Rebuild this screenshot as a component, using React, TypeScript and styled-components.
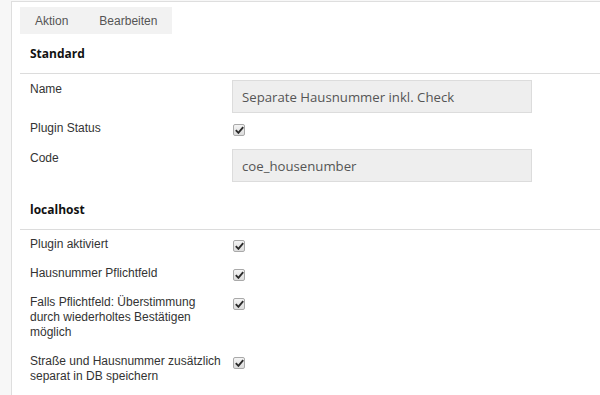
import React from "react";
import styled, { createGlobalStyle } from "styled-components";

const Global = createGlobalStyle`
  html, body { margin: 0; padding: 0; background: #ffffff; }
  body { font-family: "Liberation Sans", Arial, sans-serif; }
`;

const Page = styled.div`
  display: flex;
  width: 600px;
  height: 395px;
  overflow: hidden;
  background: #f7f7f7;
`;

const Sidebar = styled.div`
  width: 11px;
  flex: none;
`;

const Main = styled.div`
  flex: 1;
  margin-top: 1px;
  background: #ffffff;
  border-top: 1px solid #dedede;
  border-left: 1px solid #dedede;
  padding: 5px 0 0 8px;
`;

const TabBar = styled.div`
  display: inline-flex;
  background: #f2f2f2;
  height: 27px;
  align-items: center;
`;

const Tab = styled.div`
  padding: 0 15px 0 16px;
  font-size: 12px;
  color: #555;
  &:first-child { padding-left: 15px; }
`;

const Heading = styled.div`
  padding: 10px 10px 9px;
  font-family: "Open Sans", sans-serif;
  font-weight: 700;
  font-size: 12px;
  line-height: 20px;
  color: #111;
  border-bottom: 1px solid #dcdcdc;
`;

const FormList = styled.div`
  display: flex;
  flex-direction: column;
  gap: 7px;
  padding: 6px 0 8px 10px;
`;

const Row = styled.div`
  display: grid;
  grid-template-columns: 202px 300px;
  align-items: start;
`;

const Label = styled.div<{ $input?: boolean }>`
  font-size: 12px;
  line-height: 15px;
  color: #333;
  padding: ${(p) => (p.$input ? "2px" : "1px")} 8px 6px 0;
`;

const TextField = styled.div`
  box-sizing: border-box;
  height: 33px;
  background: #eeeeee;
  border: 1px solid #dcdcdc;
  padding: 0 9px;
  display: flex;
  align-items: center;
  font-family: "Open Sans", sans-serif;
  font-size: 13.2px;
  color: #555;
`;

const Check = styled.span`
  box-sizing: border-box;
  display: flex;
  align-items: center;
  justify-content: center;
  width: 12px;
  height: 12px;
  margin: 4px 0 0 1px;
  border: 1px solid #a9a9a9;
  border-radius: 2px;
  background: linear-gradient(#f4f4f4, #dcdcdc);
`;

const Checkmark = () => (
  <Check>
    <svg width="9" height="8" viewBox="0 0 9 8">
      <path d="M0.8 4.2 L3.4 6.8 L8.2 1.2" fill="none" stroke="#2b2b2b" strokeWidth="1.9" />
    </svg>
  </Check>
);

type Field =
  | { label: string; kind: "text"; value: string }
  | { label: string; kind: "check" };

const standard: Field[] = [
  { label: "Name", kind: "text", value: "Separate Hausnummer inkl. Check" },
  { label: "Plugin Status", kind: "check" },
  { label: "Code", kind: "text", value: "coe_housenumber" },
];

const localhost: Field[] = [
  { label: "Plugin aktiviert", kind: "check" },
  { label: "Hausnummer Pflichtfeld", kind: "check" },
  {
    label: "Falls Pflichtfeld: Überstimmung durch wiederholtes Bestätigen möglich",
    kind: "check",
  },
  { label: "Straße und Hausnummer zusätzlich separat in DB speichern", kind: "check" },
];

const Section = ({ title, fields }: { title: string; fields: Field[] }) => (
  <>
    <Heading>{title}</Heading>
    <FormList>
      {fields.map((f, i) => (
        <Row key={i}>
          <Label $input={f.kind === "text"}>{f.label}</Label>
          {f.kind === "text" ? <TextField>{f.value}</TextField> : <Checkmark />}
        </Row>
      ))}
    </FormList>
  </>
);

export default function App() {
  return (
    <>
      <Global />
      <Page>
        <Sidebar />
        <Main>
          <TabBar>
            <Tab>Aktion</Tab>
            <Tab>Bearbeiten</Tab>
          </TabBar>
          <Section title="Standard" fields={standard} />
          <Section title="localhost" fields={localhost} />
        </Main>
      </Page>
    </>
  );
}
